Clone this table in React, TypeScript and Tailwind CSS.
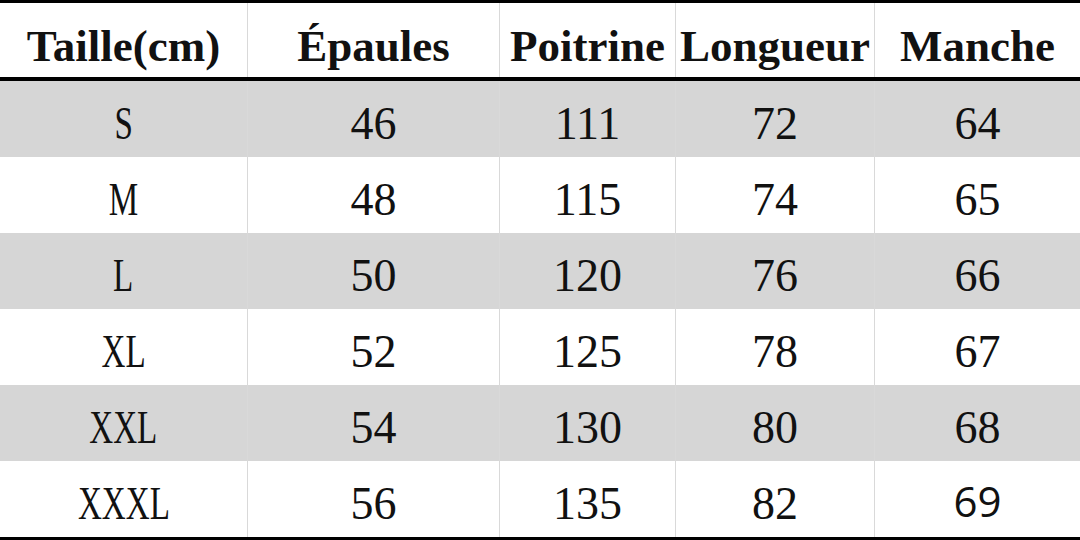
const headers = ["Taille(cm)", "Épaules", "Poitrine", "Longueur", "Manche"]

const rows = [
  { size: "S", values: ["46", "111", "72", "64"] },
  { size: "M", values: ["48", "115", "74", "65"] },
  { size: "L", values: ["50", "120", "76", "66"] },
  { size: "XL", values: ["52", "125", "78", "67"] },
  { size: "XXL", values: ["54", "130", "80", "68"] },
  { size: "XXXL", values: ["56", "135", "82", "69"] },
]

const cols = "grid grid-cols-[247px_252px_176px_199px_1fr]"

export default function App() {
  return (
    <div className="w-[1080px] h-[540px] bg-white border-y-[3px] border-black text-[#111] font-['Liberation_Serif',serif] overflow-hidden">
      {/* Header */}
      <div className={`${cols} h-[78px] border-b-4 border-black`}>
        {headers.map((h, i) => (
          <div
            key={h}
            className={`flex items-center justify-center pt-3 text-[45px] font-bold leading-none ${i > 0 ? "border-l border-[#d9d9d9]" : ""}`}
          >
            {h}
          </div>
        ))}
      </div>

      {/* Body */}
      {rows.map((row, r) => (
        <div key={row.size} className={`${cols} h-[76px] ${r % 2 === 0 ? "bg-[#d6d6d6]" : "bg-white"}`}>
          <div className="flex items-center justify-center pt-[10px] text-[46px] leading-none">
            <span className="inline-block scale-x-[0.72]">{row.size}</span>
          </div>
          {row.values.map((v, i) => {
            const sans = row.size === "XXXL" && i === 3
            return (
              <div
                key={i}
                className={`flex items-center justify-center border-l border-[#d9d9d9] leading-none ${
                  sans ? "pt-[3px] text-[42px] font-['Open_Sans',sans-serif]" : "pt-[10px] text-[46px]"
                }`}
              >
                {v}
              </div>
            )
          })}
        </div>
      ))}
    </div>
  )
}
